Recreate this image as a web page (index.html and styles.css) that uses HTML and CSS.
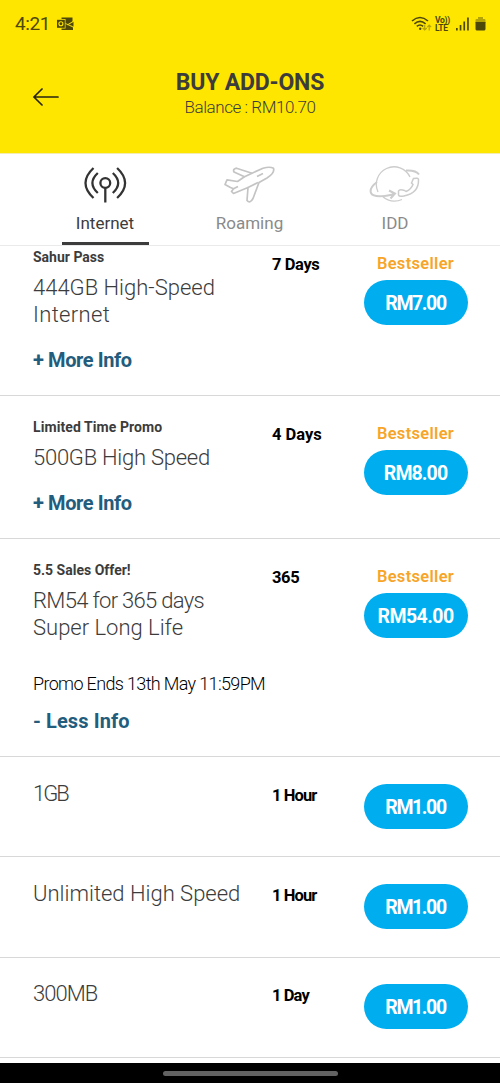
FILE: index.html
```html
<!DOCTYPE html>
<html lang="en">
<head>
<meta charset="utf-8">
<title>Buy Add-Ons</title>
<link rel="stylesheet" href="styles.css">
</head>
<body>
<div class="screen">
  <header class="header">
    <div class="status">
      <span class="clock">4:21</span>
      <svg class="mail" width="17" height="14" viewBox="0 0 17 14"><path d="M4.500 .5h11v4.500l-4 2.500 4.500 2v3.500H4.500v-1.500h4V2h-4z" fill="#4d4708"/><path d="M16.500 4.800v4.700L11.500 7.500z" fill="#4d4708"/><path d="M8.500 6.500l7.500 3.500M10.500 7.800l5.500-3.300" stroke="#ffe600" stroke-width=".9"/><rect x="0" y="2.800" width="7.800" height="8" fill="#4d4708"/><circle cx="3.900" cy="6.800" r="2" fill="none" stroke="#ffe600" stroke-width="1.100"/></svg>
      <span class="spacer"></span>
      <svg class="wifi" width="22" height="16" viewBox="0 0 22 16" fill="none" stroke="#4d4708" stroke-width="1.600"><path d="M1 5Q9-2 17 5"/><path d="M3.400 7.800Q9 3 14.600 7.800"/><path d="M5.800 10.400Q9 7.600 12.200 10.400"/><circle cx="9.200" cy="12.700" r="1.200" fill="#4d4708" stroke="none"/><path d="M13.700 9v5m-2-2 2 2 2-2M18.200 14.500V9.200m-2 2 2-2 2 2" stroke="#b3a304" stroke-width="1.200"/></svg>
      <span class="volte"><b>Vo))</b><b>LTE</b></span>
      <svg class="signal" width="14" height="14" viewBox="0 0 14 14" fill="#4d4708"><rect x="0" y="11" width="1.700" height="2.500"/><rect x="3.700" y="8" width="1.700" height="5.500"/><rect x="7.400" y="4.500" width="1.700" height="9"/><rect x="11.100" y=".5" width="1.700" height="13"/></svg>
      <svg class="battery" width="11" height="14" viewBox="0 0 11 14"><path d="M3 0h5v2h1.500q1 0 1 1v3H.5V3q0-1 1-1H3z" fill="#b3a304"/><path d="M.5 5h10v7q0 1.500-1.500 1.500H2Q.5 13.500.5 12z" fill="#4d4708"/></svg>
    </div>
    <div class="titlebar">
      <svg class="back" width="28" height="20" viewBox="0 0 28 20" fill="none" stroke="#272510" stroke-width="1.700" stroke-linecap="round" stroke-linejoin="round"><path d="M25 10H.9M9 2 .9 10l8.100 8"/></svg>
      <div class="heading">
        <h1 class="title">BUY ADD-ONS</h1>
        <div class="balance">Balance : RM10.70</div>
      </div>
    </div>
  </header>

  <nav class="tabs">
    <div class="tab active">
      <svg width="44" height="38" viewBox="0 0 44 38" fill="none" stroke="#333" stroke-width="2.300"><circle cx="22.300" cy="17" r="4.900"/><path d="M22.300 22v14.500"/><path d="M10.500 2Q-5.500 17 10.500 32M14.800 7Q4 17 14.800 27M34.100 2Q50.100 17 34.100 32M29.800 7Q40.600 17 29.800 27"/></svg>
      <span class="label">Internet</span>
    </div>
    <div class="tab">
      <svg width="52" height="38" viewBox="0 0 52 38" fill="none" stroke="#c4c4c4" stroke-width="1.700" stroke-linejoin="round"><path d="M28 7.200 39 2.200Q46 .3 49.500 2.300 51 7 43 12L35 16.500 29 32.500Q26 38 23 34.500L24 21.500 9.500 27.500 7.500 25.500 9.500 22.800 6.500 21.500 1 18.500 3 13.800 13.500 15.500 20.500 10.800 10 6Q8.500 3 12.500 2.200Z"/><path d="M20.500 10.800 28 7.200M24 21.500 34 16.500M33 10.500 39 7.500M9.500 22.800 14 20.500"/></svg>
      <span class="label">Roaming</span>
    </div>
    <div class="tab">
      <svg width="52" height="38" viewBox="0 0 52 38" fill="none" stroke="#ccc" stroke-width="1.300"><path d="M9 26A17.300 17.300 0 1 1 41 11M13 30Q22 38 33 33.500"/><path d="M8 16Q0 22 2 27Q5 33 26 28M20 24.500l6 3-4.500 5M37 4.500Q47 4 50 8.500" stroke-width="2"/><path d="M44.500 12.500q5-1 5 1Q50 27 35 30q-5 1-5.500-1v-4q1-2 6-.5l1.500 1q5-2 7-7l-1.500-1.500z" stroke-width="1.500"/></svg>
      <span class="label">IDD</span>
    </div>
  </nav>

  <main class="list">
    <section class="row first">
      <div class="info"><div class="tag">Sahur Pass</div><div class="name">444GB High-Speed<br><span class="loose">Internet</span></div><div class="more">+ More Info</div></div>
      <div class="days snug">7 Days</div>
      <div class="buy"><div class="best">Bestseller</div><div class="price narrow">RM7.00</div></div>
    </section>
    <section class="row">
      <div class="info"><div class="tag wide">Limited Time Promo</div><div class="name snug">500GB High Speed</div><div class="more">+ More Info</div></div>
      <div class="days">4 Days</div>
      <div class="buy"><div class="best">Bestseller</div><div class="price snug">RM8.00</div></div>
    </section>
    <section class="row">
      <div class="info"><div class="tag">5.5 Sales Offer!</div><div class="name"><span class="tight">RM54 for 365 days</span><br>Super Long Life</div><div class="promo">Promo Ends 13th May 11:59PM</div><div class="more less">- Less Info</div></div>
      <div class="days snug">365</div>
      <div class="buy"><div class="best">Bestseller</div><div class="price">RM54.00</div></div>
    </section>
    <section class="row plain">
      <div class="info"><div class="name narrow">1GB</div></div>
      <div class="days narrow">1 Hour</div>
      <div class="buy"><div class="price narrow">RM1.00</div></div>
    </section>
    <section class="row plain">
      <div class="info"><div class="name">Unlimited High Speed</div></div>
      <div class="days narrow">1 Hour</div>
      <div class="buy"><div class="price narrow">RM1.00</div></div>
    </section>
    <section class="row plain">
      <div class="info"><div class="name tight">300MB</div></div>
      <div class="days narrow">1 Day</div>
      <div class="buy"><div class="price narrow">RM1.00</div></div>
    </section>
  </main>
  <footer class="navbar"><div class="handle"></div></footer>
</div>
</body>
</html>
```
FILE: styles.css
```css
* { box-sizing: border-box; }
body { margin: 0; background: #fff; font-family: Roboto, "Liberation Sans", sans-serif; color: #3c3c3c; }
.screen { width: 500px; height: 1083px; display: flex; flex-direction: column; overflow: hidden; }

.header { height: 154px; flex: none; background: #ffe600; border-bottom: 1px solid #f4ecb0; }
.status { display: flex; align-items: center; height: 48px; padding: 0 14px 0 15px; color: #4d4708; }
.clock { font-size: 19px; line-height: 24px; letter-spacing: -0.4px; }
.mail { margin-left: 7px; }
.spacer { flex: 1; }
.volte { display: flex; flex-direction: column; width: 16px; margin: 0 5px 0 2px; font-size: 8.500px; line-height: 8px; letter-spacing: -0.3px; white-space: nowrap; }
.signal { margin-right: 5px; }
.titlebar { display: flex; align-items: center; padding: 0 33px; height: 97px; }
.back { flex: none; }
.heading { flex: 1; padding-right: 28px; text-align: center; margin-top: -6px; }
.title { margin: 0; font-size: 23px; line-height: 27px; font-weight: 700; letter-spacing: -0.2px; }
.balance { font-size: 17px; line-height: 22px; font-weight: 300; letter-spacing: -0.45px; }

.tabs { flex: none; height: 92px; padding: 0 33px; display: grid; grid-template-columns: 144px 145px 146px; border-bottom: 1px solid #eaeaea; }
.tab { display: flex; flex-direction: column; align-items: center; padding-top: 12px; color: #8a8a8a; }
.tab.active { color: #3c3c3c; }
.tab.active::after { content: ""; width: 87px; height: 3px; margin-top: auto; background: #3c3c3c; }
.label { font-size: 17px; line-height: 22px; margin-top: 8px; }

.list { flex: 1; min-height: 0; overflow: hidden; }
.row { display: grid; grid-template-columns: 239px 91.500px 104px; padding-left: 33px; border-bottom: 1px solid #d8d8d8; white-space: nowrap; }
.info { padding: 21px 0 22px; }
.tag { font-size: 14px; line-height: 20px; font-weight: 700; }
.tag.wide { letter-spacing: 0.08px; }
.name { margin-top: 6.500px; font-size: 22px; line-height: 27px; font-weight: 300; }
.name.snug { letter-spacing: -0.25px; }
.name .loose { letter-spacing: 0.35px; }
.name .tight { letter-spacing: -0.68px; }
.name.tight { letter-spacing: -0.95px; }
.name.narrow { letter-spacing: -2px; }
.more { margin-top: 19.500px; font-size: 20px; line-height: 26px; font-weight: 700; letter-spacing: -0.4px; color: #235d7e; }
.promo { margin-top: 31.500px; font-size: 18px; line-height: 24px; font-weight: 300; letter-spacing: -0.65px; color: #000; }
.less { margin-top: 12px; letter-spacing: 0.1px; }
.days { padding-top: 27.500px; font-size: 16.500px; line-height: 22px; font-weight: 700; color: #000; }
.days.snug { letter-spacing: -0.4px; }
.days.narrow { letter-spacing: -0.9px; }
.buy { padding-top: 27px; text-align: center; }
.best { font-size: 16.500px; line-height: 22px; font-weight: 600; letter-spacing: 0.3px; color: #f7a528; margin-bottom: 5px; }
.price { height: 45px; border-radius: 23px; background: #00aef0; color: #fff; font-size: 19.500px; line-height: 47px; font-weight: 700; letter-spacing: -0.55px; }
.price.snug { letter-spacing: -0.9px; }
.price.narrow { letter-spacing: -1.4px; }
.first .info { padding-top: 1px; }
.first .days { padding-top: 7.500px; }
.first .buy { padding-top: 7px; }
.plain { height: 100.400px; }
.plain .info { padding-top: 16px; }
.plain .buy { padding-top: 26.500px; }

.navbar { flex: none; height: 20px; background: #000; display: flex; justify-content: center; padding-top: 8px; }
.handle { width: 175px; height: 5px; border-radius: 3px; background: #626262; }
```
